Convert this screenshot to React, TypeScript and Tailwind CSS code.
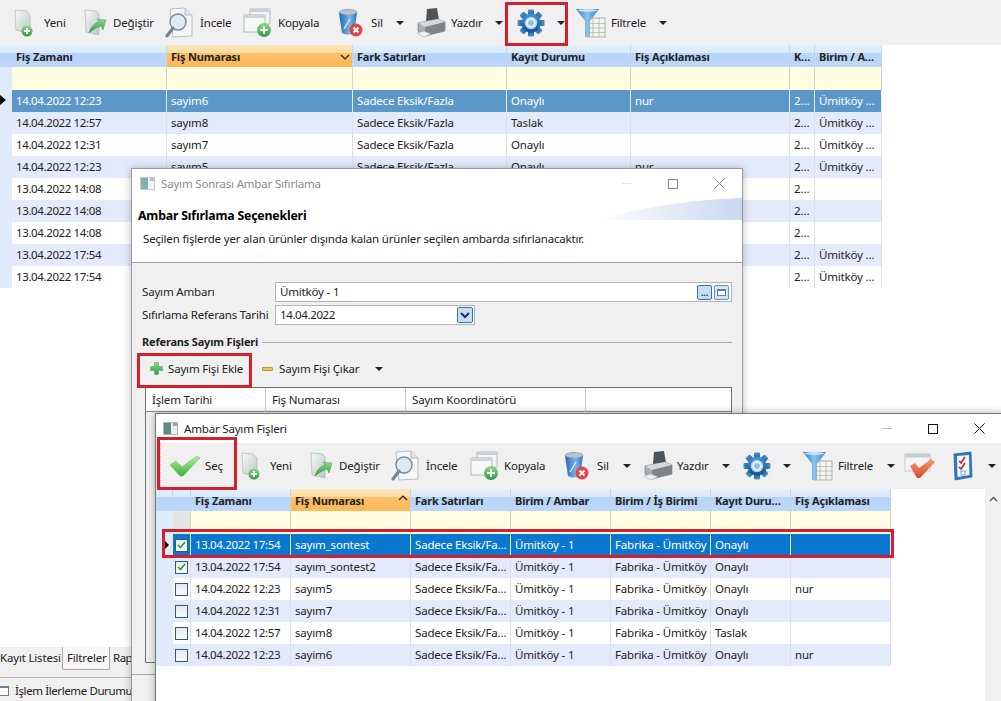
import React from "react";

const font = { fontFamily: '"Noto Sans", "Open Sans", sans-serif' };

const Defs = () => (
  <svg className="absolute h-0 w-0">
    <defs>
      <linearGradient id="page" x1="0" y1="0" x2="1" y2="1">
        <stop offset="0" stopColor="#f6f8f8" />
        <stop offset="1" stopColor="#b9c9c2" />
      </linearGradient>
      <linearGradient id="green" x1="0" y1="0" x2="0" y2="1">
        <stop offset="0" stopColor="#8fd88a" />
        <stop offset="1" stopColor="#2f9a45" />
      </linearGradient>
      <linearGradient id="gear" x1="0" y1="0" x2="0" y2="1">
        <stop offset="0" stopColor="#4a94d6" />
        <stop offset="1" stopColor="#174f88" />
      </linearGradient>
      <linearGradient id="funnel" x1="0" y1="0" x2="1" y2="0">
        <stop offset="0" stopColor="#2f7fc0" />
        <stop offset="0.5" stopColor="#8cc4ec" />
        <stop offset="1" stopColor="#2b78b8" />
      </linearGradient>
      <linearGradient id="bin" x1="0" y1="0" x2="1" y2="0">
        <stop offset="0" stopColor="#1f68b4" />
        <stop offset="0.6" stopColor="#7fb4e4" />
        <stop offset="1" stopColor="#2c74bc" />
      </linearGradient>
      <linearGradient id="check" x1="0" y1="0" x2="0" y2="1">
        <stop offset="0" stopColor="#b8eda0" />
        <stop offset="1" stopColor="#3fae3f" />
      </linearGradient>
      <linearGradient id="redcheck" x1="0" y1="0" x2="0" y2="1">
        <stop offset="0" stopColor="#f59a70" />
        <stop offset="1" stopColor="#d9482c" />
      </linearGradient>
      <linearGradient id="swoosh" x1="0" y1="0" x2="1" y2="0">
        <stop offset="0" stopColor="#ffffff" />
        <stop offset="1" stopColor="#c8d8f0" />
      </linearGradient>
    </defs>
  </svg>
);

const GreenBall = ({ cx, cy, r }: { cx: number; cy: number; r: number }) => (
  <g>
    <circle cx={cx} cy={cy} r={r} fill="url(#green)" />
    <path d={`M${cx - r * 0.55} ${cy}H${cx + r * 0.55}M${cx} ${cy - r * 0.55}V${cy + r * 0.55}`} stroke="#fff" strokeWidth="2" />
  </g>
);

const NewIcon = () => (
  <svg width="20" height="28" viewBox="0 0 20 28">
    <path d="M1 1 L12 2 L16 6 L16 25 L2 21 Z" fill="url(#page)" stroke="#aab5b0" strokeWidth="0.7" />
    <GreenBall cx={13} cy={22} r={5.5} />
  </svg>
);

const EditIcon = () => (
  <svg width="23" height="28" viewBox="0 0 23 28">
    <path d="M1 1 L12 2 L15 5 L15 26 L2 23 Z" fill="url(#page)" stroke="#aab5b0" strokeWidth="0.7" />
    <path d="M5 24 C7 17 11 14 15 13 L13 10 L22 11 L19 21 L17 17 C13 18 9 21 5 24 Z" fill="url(#green)" stroke="#2f8a45" strokeWidth="0.4" />
  </svg>
);

const ViewIcon = () => (
  <svg width="28" height="32" viewBox="0 0 28 32">
    <path d="M5 2 L20 1 L27 8 L27 29 L8 30 Z" fill="#f4f6f8" stroke="#a9aeb3" strokeWidth="0.8" />
    <path d="M20 1 L20 8 L27 8" fill="#dfe3e7" stroke="#a9aeb3" strokeWidth="0.8" />
    <circle cx="13" cy="15" r="8" fill="#dbeaf4" stroke="#7b8a94" strokeWidth="1.4" />
    <path d="M8 21 L2 29" stroke="#77808a" strokeWidth="3" strokeLinecap="round" />
  </svg>
);

const CopyIcon = () => (
  <svg width="29" height="30" viewBox="0 0 29 30">
    <rect x="7" y="1" width="20" height="15" fill="#f2f5f6" stroke="#a5acb0" strokeWidth="0.8" />
    <rect x="7" y="1" width="20" height="3" fill="#c9d1d6" />
    <rect x="1" y="7" width="21" height="17" fill="#f6f8f8" stroke="#a5acb0" strokeWidth="0.8" />
    <rect x="1" y="7" width="21" height="3" fill="#cdd5da" />
    <GreenBall cx={21} cy={22} r={7} />
  </svg>
);

const BinIcon = () => (
  <svg width="25" height="28" viewBox="0 0 25 28">
    <ellipse cx="10" cy="3.5" rx="9" ry="3" fill="#b9c4cd" stroke="#6b7b88" strokeWidth="0.6" />
    <path d="M1 4 L4 24 Q10 27 16 24 L19 4 Q10 8 1 4 Z" fill="url(#bin)" />
    <path d="M6 20 L12 10" stroke="#d9ecfb" strokeWidth="1.4" />
    <circle cx="18" cy="21" r="6.5" fill="#e0464a" />
    <path d="M15.5 18.5 L20.5 23.5 M20.5 18.5 L15.5 23.5" stroke="#fff" strokeWidth="2" />
  </svg>
);

const PrinterIcon = () => (
  <svg width="30" height="30" viewBox="0 0 30 30">
    <path d="M11 1 L21 0 L23 12 L10 13 Z" fill="#4e5358" />
    <path d="M2 15 L22 11 L29 14 L29 23 L9 28 L2 23 Z" fill="#a9afb4" stroke="#6a6f74" strokeWidth="0.6" />
    <path d="M2 15 L9 19 L29 14 L22 11 Z" fill="#d5d8da" />
    <path d="M9 19 L9 28 L29 23 L29 14 Z" fill="#7f8488" />
    <path d="M1 25 L8 23 L15 26 L8 29 Z" fill="#eef0f1" stroke="#9a9fa3" strokeWidth="0.5" />
  </svg>
);

const GearIcon = () => {
  const teeth = [0, 45, 90, 135, 180, 225, 270, 315];
  return (
    <svg width="28" height="28" viewBox="0 0 28 28">
      {teeth.map((a) => (
        <rect key={a} x="11" y="0.5" width="6" height="7" rx="1" fill="url(#gear)" transform={`rotate(${a} 14 14)`} />
      ))}
      <circle cx="14" cy="14" r="9.5" fill="url(#gear)" />
      <circle cx="14" cy="14" r="5.5" fill="#eef6fc" stroke="#a9d2f2" strokeWidth="1.5" />
      <circle cx="14" cy="14" r="3" fill="#8fc0ea" />
    </svg>
  );
};

const FunnelIcon = () => (
  <svg width="31" height="30" viewBox="0 0 31 30">
    <rect x="12" y="10" width="18" height="19" fill="#f3f5ee" stroke="#8a9a8a" strokeWidth="0.7" />
    <path d="M12 15.5H30M12 20H30M12 24.5H30M18 10V29M24 10V29" stroke="#a6b09c" strokeWidth="0.7" />
    <path d="M1 1 L24 1 L15 13 L15 29 L10 29 L10 13 Z" fill="url(#funnel)" />
    <ellipse cx="12.5" cy="2.5" rx="10" ry="1.5" fill="#bfe0f6" />
  </svg>
);

const BigCheck = () => (
  <svg width="30" height="22" viewBox="0 0 30 22">
    <path d="M0 10 L6 6 L12 12 L27 1 L30 3 L13 21 L10 21 Z" fill="url(#check)" stroke="#5db85a" strokeWidth="0.5" />
  </svg>
);

const CheckWindow = () => (
  <svg width="32" height="28" viewBox="0 0 32 28">
    <rect x="1" y="2" width="25" height="17" fill="#f4f5f6" stroke="#b4b8bc" strokeWidth="0.7" />
    <rect x="1" y="2" width="25" height="3.5" fill="#c5ccd2" />
    <path d="M6 14 L11 11 L15 16 L27 7 L31 10 L16 26 L13 26 Z" fill="url(#redcheck)" />
  </svg>
);

const ClipboardIcon = () => (
  <svg width="21" height="30" viewBox="0 0 21 30">
    <path d="M2 3 L19 1 L20 26 L3 29 Z" fill="#2e78bd" stroke="#1f5f9e" strokeWidth="0.7" />
    <path d="M5 5 L17 4 L17.5 24 L5.5 26 Z" fill="#eef4fa" />
    <path d="M7 10 L9 12 L13 6 M7 16 L9 18 L13 12" stroke="#b02a30" strokeWidth="1.6" fill="none" />
    <rect x="9" y="20" width="4" height="4" fill="none" stroke="#5a8fc0" strokeWidth="0.7" />
  </svg>
);

const WinIcon = ({ dim }: { dim?: boolean }) => (
  <svg width="15" height="13" viewBox="0 0 15 13" className={dim ? "opacity-70" : ""}>
    <rect x="0.5" y="0.5" width="14" height="12" fill="#e8eef0" stroke="#aeb6b8" />
    <rect x="1" y="1" width="7" height="11" fill="#5f8b87" />
    <rect x="10" y="1" width="4" height="3" fill="#9aa5a8" />
  </svg>
);

const Caret = ({ className }: { className: string }) => (
  <span className={`h-0 w-0 border-x-[4px] border-t-[4px] border-x-transparent border-t-[#222] ${className}`} />
);

const headerBg = "bg-[linear-gradient(#e6f0fc_0%,#d9e8fb_35%,#b6d4f8_36%,#bcd8f9_100%)]";
const sortedBg = "bg-[linear-gradient(#fbe6bd_0%,#fbdca0_35%,#fdc06a_36%,#fdb858_100%)]";

const mainCols = "grid grid-cols-[155px_186px_154px_124px_159px_25px_67px]";
const mainHeads = ["Fiş Zamanı", "Fiş Numarası", "Fark Satırları", "Kayıt Durumu", "Fiş Açıklaması", "K…", "Birim / A…"];
const mainRows = [
  ["14.04.2022 12:23", "sayim6", "Sadece Eksik/Fazla", "Onaylı", "nur", "2…", "Ümitköy …"],
  ["14.04.2022 12:57", "sayım8", "Sadece Eksik/Fazla", "Taslak", "", "2…", "Ümitköy …"],
  ["14.04.2022 12:31", "sayım7", "Sadece Eksik/Fazla", "Onaylı", "", "2…", "Ümitköy …"],
  ["14.04.2022 12:23", "sayım5", "Sadece Eksik/Fazla", "Onaylı", "nur", "2…", "Ümitköy …"],
  ["13.04.2022 14:08", "", "", "", "", "2…", ""],
  ["13.04.2022 14:08", "", "", "", "", "2…", ""],
  ["13.04.2022 14:08", "", "", "", "", "2…", ""],
  ["13.04.2022 17:54", "", "", "", "", "2…", "Ümitköy …"],
  ["13.04.2022 17:54", "", "", "", "", "2…", "Ümitköy …"],
];

const MainGrid = () => (
  <div className="flex w-[882px] text-[11.5px] leading-[22px] text-[#222]">
    <div className="w-3 bg-[#dfeafb]">
      <div className={`h-[22px] ${headerBg}`} />
      <div className="h-[22px]" />
      <div className="flex h-[22px] items-center">
        <span className="h-0 w-0 border-y-[5px] border-l-[6px] border-y-transparent border-l-black" />
      </div>
    </div>
    <div className="flex-1">
      <div className={`${mainCols} h-[22px] text-[11px] font-bold leading-[24px] ${headerBg}`}>
        {mainHeads.map((h, i) => (
          <div key={h} className={`relative truncate border-r border-[#c6d4e6] pl-1 ${i === 1 ? sortedBg : ""}`}>
            {h}
            {i === 1 && (
              <svg width="10" height="6" viewBox="0 0 10 6" className="absolute right-[2px] top-[9px]">
                <path d="M1 1 L5 5 L9 1" stroke="#222" strokeWidth="1.2" fill="none" />
              </svg>
            )}
          </div>
        ))}
      </div>
      <div className={`${mainCols} h-[23px] bg-[#fffee3]`}>
        {mainHeads.map((h) => (
          <div key={h} className="border-r border-[#d4d4d0]" />
        ))}
      </div>
      {mainRows.map((r, i) => (
        <div
          key={i}
          className={`${mainCols} h-[22px] ${i === 0 ? "bg-[#5c97ca] text-white" : i % 2 === 1 ? "bg-[#e3eafb]" : "bg-white"}`}
        >
          {r.map((c, j) => (
            <div key={j} className={`truncate border-r pl-1 ${j === 0 ? "tracking-[-0.38px]" : ""} ${i === 0 ? "border-[#e6eef6]" : "border-[#dcdfe4]"}`}>
              {c}
            </div>
          ))}
        </div>
      ))}
    </div>
  </div>
);

const MainToolbar = () => (
  <div className="flex h-[45px] items-center whitespace-nowrap bg-[#f0f0f0] pl-[14px] text-[11.5px] text-[#222]">
    <NewIcon />
    <span className="ml-[10px] w-[21px]">Yeni</span>
    <span className="ml-[19px] flex"><EditIcon /></span>
    <span className="ml-[6px] w-[40px]">Değiştir</span>
    <span className="ml-[12px] flex"><ViewIcon /></span>
    <span className="ml-[7px] w-[31px]">İncele</span>
    <span className="ml-[12px] flex"><CopyIcon /></span>
    <span className="ml-[6px] w-[42px]">Kopyala</span>
    <span className="ml-[18px] flex"><BinIcon /></span>
    <span className="ml-[8px] w-[12px]">Sil</span>
    <Caret className="ml-[13px]" />
    <span className="ml-[12px] flex"><PrinterIcon /></span>
    <span className="ml-[5px] w-[31px]">Yazdır</span>
    <Caret className="ml-[13px]" />
    <span className="ml-[14px] flex"><GearIcon /></span>
    <Caret className="ml-[12px]" />
    <span className="ml-[10px] flex"><FunnelIcon /></span>
    <span className="ml-[5px] w-[35px]">Filtrele</span>
    <Caret className="ml-[13px]" />
  </div>
);

const RedBox = ({ className }: { className: string }) => (
  <div className={`pointer-events-none absolute border-[3px] border-[#d4202c] ${className}`} />
);

const WinButtons = ({ dim }: { dim?: boolean }) => (
  <div className="flex items-center">
    <span className={`h-px w-[10px] ${dim ? "bg-[#e4e4e4]" : "bg-[#bbb]"}`} />
    <span className={`ml-[36px] h-[10px] w-[10px] border ${dim ? "border-[#8a8a8a]" : "border-[#111]"}`} />
    <svg width="11" height="11" viewBox="0 0 11 11" className="ml-[36px]">
      <path d="M0.5 0.5 L10.5 10.5 M10.5 0.5 L0.5 10.5" stroke={dim ? "#8a8a8a" : "#111"} strokeWidth="1" />
    </svg>
  </div>
);

const ResetDialog = () => (
  <div className="absolute left-[131px] top-[168px] flex h-[540px] w-[612px] flex-col border border-[#9a9a9a] bg-[#f0f0f0] text-[11.5px] text-[#222] shadow-[0_0_8px_rgba(0,0,0,0.25)]">
    <div className="flex h-[29px] items-center justify-between bg-white pl-2 pr-[17px]">
      <div className="flex items-center gap-[6px] text-[#8b8b8b]">
        <WinIcon dim />
        <span>Sayım Sonrası Ambar Sıfırlama</span>
      </div>
      <WinButtons dim />
    </div>
    <div className="relative h-[65px] overflow-hidden border-b border-[#a0a0a0] bg-white">
      <svg width="145" height="22" viewBox="0 0 145 22" className="absolute right-0 top-0">
        <path d="M0 22 C40 10 90 2 145 0 L145 22 Z" fill="url(#swoosh)" />
      </svg>
      <div className="relative pl-[6px] pt-[9px] text-[12.3px] font-bold leading-[18px] text-black">Ambar Sıfırlama Seçenekleri</div>
      <div className="pl-[11px] pt-[6px] text-[11.5px] leading-[16px]">Seçilen fişlerde yer alan ürünler dışında kalan ürünler seçilen ambarda sıfırlanacaktır.</div>
    </div>
    <div className="flex items-center pl-[10px] pt-[19px]">
      <span className="w-[133px]">Sayım Ambarı</span>
      <div className="flex h-[20px] w-[457px] items-center justify-between border border-[#b0b4b8] bg-white pl-1 pr-[2px]">
        <span>Ümitköy - 1</span>
        <div className="flex gap-[2px]">
          <span className="flex h-[15px] w-[15px] items-end justify-center rounded-[2px] border border-[#3d6fa8] bg-[#c4dcf6] text-[9px] font-bold leading-[12px] text-[#234]">...</span>
          <span className="flex h-[15px] w-[15px] items-center justify-center rounded-[2px] border border-[#6a93bd] bg-[#d5e4f4]">
            <span className="h-[7px] w-[9px] border border-t-2 border-[#5d7f9e] bg-white" />
          </span>
        </div>
      </div>
    </div>
    <div className="flex items-center pl-[10px] pt-[3px]">
      <span className="w-[133px]">Sıfırlama Referans Tarihi</span>
      <div className="flex h-[20px] w-[200px] items-center justify-between border border-[#b0b4b8] bg-white pl-1 pr-[1px]">
        <span className="tracking-[-0.38px]">14.04.2022</span>
        <span className="flex h-[16px] w-[16px] items-center justify-center rounded-[2px] border border-[#3d6fa8] bg-[#c9def6]">
          <svg width="10" height="7" viewBox="0 0 10 7">
            <path d="M1 1 L5 5 L9 1" stroke="#12305c" strokeWidth="2" fill="none" />
          </svg>
        </span>
      </div>
    </div>
    <div className="flex items-center pl-[10px] pr-[10px] pt-[9px]">
      <span className="text-[11px] font-bold">Referans Sayım Fişleri</span>
      <span className="ml-[4px] h-px flex-1 bg-[#a8a8a8]" />
    </div>
    <div className="flex h-[36px] items-center pl-[18px]">
      <svg width="13" height="13" viewBox="0 0 13 13">
        <path d="M4.5 0.5H8.5V4.5H12.5V8.5H8.5V12.5H4.5V8.5H0.5V4.5H4.5Z" fill="url(#green)" stroke="#5f9a50" strokeWidth="0.5" />
      </svg>
      <span className="ml-[5px] w-[77px] whitespace-nowrap">Sayım Fişi Ekle</span>
      <span className="ml-[17px] h-[4px] w-[11px] rounded-[1px] border border-[#b99a3c] bg-[#e8c860]" />
      <span className="ml-[6px] w-[82px] whitespace-nowrap">Sayım Fişi Çıkar</span>
      <Caret className="ml-[14px]" />
    </div>
    <div className="ml-[13px] h-[276px] w-[587px] border border-[#707070] bg-[#f0f0f0]">
      <div className="grid h-[24px] grid-cols-[120px_140px_180px_147px] border-b border-[#888] bg-white leading-[24px]">
        <div className="border-r border-[#ccc] pl-[6px]">İşlem Tarihi</div>
        <div className="border-r border-[#ccc] pl-[6px]">Fiş Numarası</div>
        <div className="border-r border-[#ccc] pl-[6px]">Sayım Koordinatörü</div>
        <div />
      </div>
    </div>
    <div className="mt-[11px] h-px bg-[#a8a8a8]" />
  </div>
);

const dlgCols = "grid grid-cols-[100px_120px_100px_100px_100px_80px_100px]";
const dlgHeads = ["Fiş Zamanı", "Fiş Numarası", "Fark Satırları", "Birim / Ambar", "Birim / İş Birimi", "Kayıt Duru…", "Fiş Açıklaması"];
const dlgRows = [
  { on: true, c: ["13.04.2022 17:54", "sayım_sontest", "Sadece Eksik/Fa…", "Ümitköy - 1", "Fabrika - Ümitköy", "Onaylı", ""] },
  { on: true, c: ["13.04.2022 17:54", "sayım_sontest2", "Sadece Eksik/Fa…", "Ümitköy - 1", "Fabrika - Ümitköy", "Onaylı", ""] },
  { on: false, c: ["14.04.2022 12:23", "sayım5", "Sadece Eksik/Fa…", "Ümitköy - 1", "Fabrika - Ümitköy", "Onaylı", "nur"] },
  { on: false, c: ["14.04.2022 12:31", "sayım7", "Sadece Eksik/Fa…", "Ümitköy - 1", "Fabrika - Ümitköy", "Onaylı", ""] },
  { on: false, c: ["14.04.2022 12:57", "sayım8", "Sadece Eksik/Fa…", "Ümitköy - 1", "Fabrika - Ümitköy", "Taslak", ""] },
  { on: false, c: ["14.04.2022 12:23", "sayim6", "Sadece Eksik/Fa…", "Ümitköy - 1", "Fabrika - Ümitköy", "Onaylı", "nur"] },
];

const Check = ({ on }: { on: boolean }) => (
  <span className="flex h-[13px] w-[13px] items-center justify-center border border-[#2f5a78] bg-[linear-gradient(#e6e9ec,#fafafa)]">
    {on && (
      <svg width="9" height="8" viewBox="0 0 9 8">
        <path d="M1 4 L3.5 6.5 L8 1" stroke="#2f9a3c" strokeWidth="1.6" fill="none" />
      </svg>
    )}
  </span>
);

const DialogGrid = () => (
  <div className="w-[735px]">
    <div className={`flex h-[22px] text-[11px] font-bold ${headerBg}`}>
      <div className="w-[17px] border-r border-[#c6d4e6]" />
      <div className="w-[18px] border-r border-[#c6d4e6]" />
      <div className={`${dlgCols} flex-1`}>
        {dlgHeads.map((h, i) => (
          <div key={h} className={`relative truncate border-r border-[#c6d4e6] pl-1 leading-[24px] ${i === 1 ? sortedBg : ""}`}>
            {h}
            {i === 1 && (
              <svg width="10" height="6" viewBox="0 0 10 6" className="absolute right-[2px] top-[6px]">
                <path d="M1 5 L5 1 L9 5" stroke="#222" strokeWidth="1.2" fill="none" />
              </svg>
            )}
          </div>
        ))}
      </div>
    </div>
    <div className="flex h-[23px]">
      <div className="w-[17px] bg-[#dfeafb]" />
      <div className="w-[18px] border-r border-[#d4d4d0] bg-[#e4e4e4]" />
      <div className={`${dlgCols} flex-1 bg-[#fffee3]`}>
        {dlgHeads.map((h) => (
          <div key={h} className="border-r border-[#d4d4d0]" />
        ))}
      </div>
    </div>
    {dlgRows.map((r, i) => {
      const sel = i === 0;
      return (
        <div key={i} className={`flex h-[22px] ${sel ? "text-white" : ""}`}>
          <div className="flex w-[17px] items-center bg-[#dfeafb] pl-[8px]">
            {sel && <span className="h-0 w-0 border-y-[5px] border-l-[5px] border-y-transparent border-l-black" />}
          </div>
          <div className={`flex w-[18px] items-center justify-center border-r ${sel ? "border-[#dcebf8] bg-[#0a78d0]" : i % 2 === 1 ? "border-[#dcdfe4] bg-[#e3eafb]" : "border-[#dcdfe4] bg-white"}`}>
            <Check on={r.on} />
          </div>
          <div className={`${dlgCols} flex-1 ${sel ? "bg-[#0a78d0]" : i % 2 === 1 ? "bg-[#e3eafb]" : "bg-white"}`}>
            {r.c.map((c, j) => (
              <div key={j} className={`truncate border-r pl-1 leading-[22px] ${j === 0 ? "tracking-[-0.38px]" : ""} ${sel ? "border-[#dcebf8]" : "border-[#dcdfe4]"}`}>
                {c}
              </div>
            ))}
          </div>
        </div>
      );
    })}
  </div>
);

const SelectDialog = () => (
  <div className="absolute left-[155px] top-[413px] flex h-[300px] w-[850px] flex-col border border-[#777] bg-white text-[11.5px] text-[#222] shadow-[0_0_8px_rgba(0,0,0,0.3)]">
    <div className="flex h-[29px] items-center bg-white pl-[7px]">
      <WinIcon />
      <span className="ml-[6px] w-[110px] whitespace-nowrap">Ambar Sayım Fişleri</span>
      <div className="ml-[588px]">
        <WinButtons />
      </div>
    </div>
    <div className="flex h-[46px] items-center whitespace-nowrap bg-[#f0f0f0] text-[11.5px]">
      <span className="ml-[4px] h-full border-l border-dotted border-[#e0a8a8]" />
      <span className="ml-[9px] flex"><BigCheck /></span>
      <span className="ml-[5px] w-[18px]">Seç</span>
      <span className="ml-[18px] flex"><NewIcon /></span>
      <span className="ml-[9px] w-[22px]">Yeni</span>
      <span className="ml-[18px] flex"><EditIcon /></span>
      <span className="ml-[6px] w-[40px]">Değiştir</span>
      <span className="ml-[12px] flex"><ViewIcon /></span>
      <span className="ml-[7px] w-[31px]">İncele</span>
      <span className="ml-[13px] flex"><CopyIcon /></span>
      <span className="ml-[5px] w-[42px]">Kopyala</span>
      <span className="ml-[18px] flex"><BinIcon /></span>
      <span className="ml-[8px] w-[12px]">Sil</span>
      <Caret className="ml-[14px]" />
      <span className="ml-[12px] flex"><PrinterIcon /></span>
      <span className="ml-[4px] w-[31px]">Yazdır</span>
      <Caret className="ml-[14px]" />
      <span className="ml-[13px] flex"><GearIcon /></span>
      <Caret className="ml-[12px]" />
      <span className="ml-[11px] flex"><FunnelIcon /></span>
      <span className="ml-[5px] w-[35px]">Filtrele</span>
      <Caret className="ml-[14px]" />
      <span className="ml-[9px] flex"><CheckWindow /></span>
      <span className="ml-[16px] flex"><ClipboardIcon /></span>
      <Caret className="ml-[15px]" />
    </div>
    <div className="flex flex-1">
      <div className="w-[829px]">
        <DialogGrid />
      </div>
      <div className="flex w-[16px] justify-center bg-[#f0f0f0] pt-[7px]">
        <svg width="9" height="6" viewBox="0 0 9 6">
          <path d="M1 5 L4.5 1.5 L8 5" stroke="#555" strokeWidth="1.4" fill="none" />
        </svg>
      </div>
    </div>
  </div>
);

const BottomTabs = () => (
  <div className="absolute bottom-0 left-0 h-[54px] w-[131px] overflow-hidden bg-[#f0f0f0] text-[11.5px] text-[#222]">
    <div className="flex h-[23px] whitespace-nowrap leading-[22px]">
      <span className="w-[62px] shrink-0">Kayıt Listesi</span>
      <span className="w-[48px] shrink-0 rounded-b-[2px] border-x border-b border-[#aaa] bg-[#f7f7f7] pl-[4px]">Filtreler</span>
      <span className="pl-[3px] tracking-[-0.5px]">Rap</span>
    </div>
    <div className="mt-[7px] flex items-center whitespace-nowrap border-t border-[#b5b5b5] pt-[4px]">
      <span className="h-[10px] w-[9px] shrink-0 border border-l-0 border-t-2 border-[#6a7f96] bg-white" />
      <span className="ml-[6px] shrink-0 tracking-[-0.4px]">İşlem İlerleme Durumu</span>
    </div>
  </div>
);

export default function App() {
  return (
    <div style={font} className="relative h-[701px] w-[1001px] overflow-hidden bg-white tracking-[-0.18px]">
      <Defs />
      <MainToolbar />
      <MainGrid />
      <BottomTabs />
      <ResetDialog />
      <SelectDialog />
      <RedBox className="left-[505px] top-[2px] h-[44px] w-[63px]" />
      <RedBox className="left-[137px] top-[353px] h-[35px] w-[115px]" />
      <RedBox className="left-[157px] top-[437px] h-[53px] w-[80px]" />
      <RedBox className="left-[162px] top-[529px] h-[29px] w-[732px]" />
    </div>
  );
}
